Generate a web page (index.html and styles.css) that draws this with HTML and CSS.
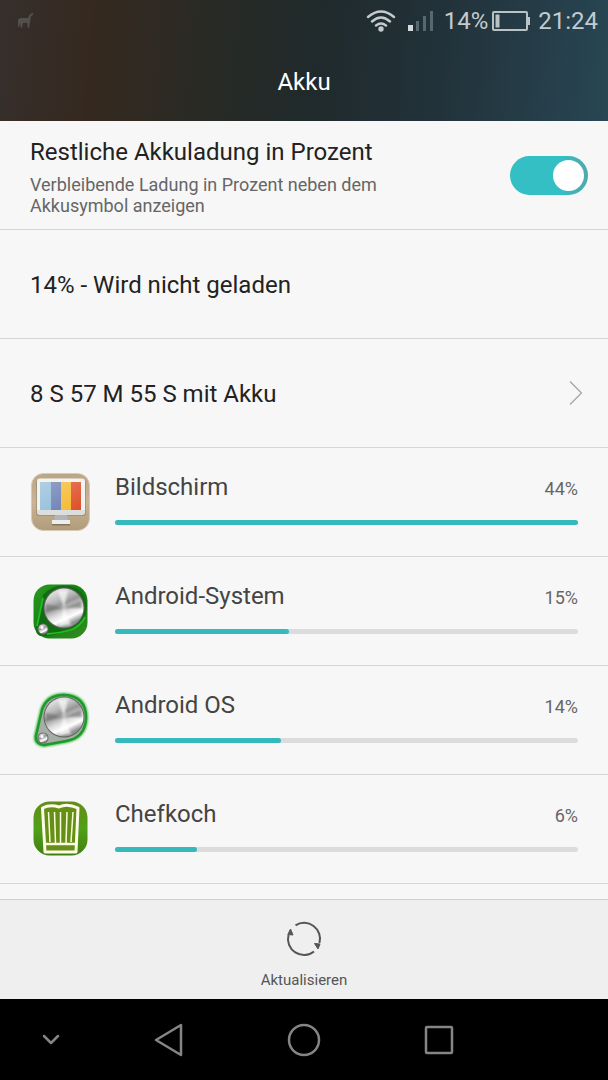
FILE: index.html
```html
<!DOCTYPE html>
<html lang="de">
<head>
  <meta charset="UTF-8" />
  <meta name="viewport" content="width=device-width, initial-scale=1.0" />
  <title>Akku</title>
  <link rel="stylesheet" href="styles.css">
</head>
<body>
  <header class="header">
    <div class="status-bar">
      <svg class="notification" width="20" height="20" viewBox="0 0 20 20">
        <path d="M2 9 4 7h8l2-4 3-1v2l-2 1-1 6-1 6h-1l-1-5H7l-1 5H5l-1-5-1 4H2z" fill="#53504c"/>
      </svg>
      <div class="status-icons">
        <svg width="30" height="22" viewBox="0 0 30 22" fill="none" stroke="#c3cbce" stroke-width="2.4" stroke-linecap="round">
          <path d="M2 7Q15-4 28 7M6 11.500Q15 3.500 24 11.500M10 15.500Q15 11.500 20 15.500"/>
          <circle cx="15" cy="19" r="2.700" fill="#c3cbce" stroke="none"/>
        </svg>
        <svg class="signal" width="26" height="22" viewBox="0 0 26 22" fill="#57686f">
          <path d="M0 15h5v6H0z" fill="#d5dadc"/>
          <path d="M8 11h3v10H8zM15 6h3v15h-3zM22 1h3v20h-3z"/>
        </svg>
        <span class="status-text">14%</span>
        <svg class="battery" width="38" height="20" viewBox="0 0 38 20">
          <rect x="1" y="1" width="34" height="18" rx="1" fill="none" stroke="#b9c2c6" stroke-width="2"/>
          <path d="M3.500 3.500h4v13h-4zM35 6h3v8h-3z" fill="#b9c2c6"/>
        </svg>
        <span class="status-text">21:24</span>
      </div>
    </div>
    <h1>Akku</h1>
  </header>

  <main class="list">
    <div class="row">
      <label class="row-text" for="percentSwitch">
        <span class="row-title">Restliche Akkuladung in Prozent</span>
        <span class="row-hint">Verbleibende Ladung in Prozent neben dem Akkusymbol anzeigen</span>
      </label>
      <input class="switch" id="percentSwitch" type="checkbox" role="switch" checked />
    </div>
    <div class="row">
      <span class="row-title">14% - Wird nicht geladen</span>
    </div>
    <a class="row" href="#">
      <span class="row-title">8 S 57 M 55 S mit Akku</span>
      <svg class="chevron" width="14" height="26" viewBox="0 0 14 26" fill="none" stroke="#a6a6a6" stroke-width="1.300">
        <path d="M1 1.500 12.500 13 1 24.500"/>
      </svg>
    </a>

    <!-- Verbraucher -->
    <div class="row app">
      <svg class="app-icon" viewBox="0 0 60 60">
        <defs>
          <linearGradient id="sand" x2="0" y2="1"><stop stop-color="#b9a587"/><stop offset=".5" stop-color="#c9b595"/><stop offset="1" stop-color="#b09b7a"/></linearGradient>
          <linearGradient id="shine" x2="1" y2="1"><stop stop-color="#fff" stop-opacity=".3"/><stop offset="1" stop-color="#fff" stop-opacity="0"/></linearGradient>
        </defs>
        <rect x="1.500" y="1.500" width="58" height="57" rx="12" fill="url(#sand)" stroke="#d8cbb4"/>
        <rect x="6" y="8" width="50" height="36" rx="3" fill="#8c7a60" opacity=".5"/>
        <rect x="7" y="6.500" width="48" height="36" rx="3" fill="#f3f3f1"/>
        <path d="M7 38h48v2q0 3-3 3H10q-3 0-3-3z" fill="#dcdddd"/>
        <path d="M10 10h11v28H10z" fill="#8dbbd8"/>
        <path d="M21 10h10v28H21z" fill="#667cb2"/>
        <path d="M31 10h10v28H31z" fill="#f5b92e"/>
        <path d="M41 10h10v28H41z" fill="#de4f29"/>
        <path d="M10 10h41v28H10z" fill="url(#shine)"/>
        <path d="M25 43h12l1 6H24z" fill="#b3b4b5"/>
        <path d="M22 48h18v4H22z" fill="#ecedee"/>
        <path d="M22 52h18v1.500H22z" fill="#857557"/>
      </svg>
      <div class="usage">
        <div class="usage-head"><span class="app-name">Bildschirm</span><span class="percent">44%</span></div>
        <div class="bar"><div class="bar-fill" style="width: 100%"></div></div>
      </div>
    </div>
    <div class="row app">
      <svg class="app-icon" viewBox="0 0 60 60">
        <defs>
          <linearGradient id="green" x2="1" y2="1"><stop stop-color="#2b9a20"/><stop offset=".5" stop-color="#138013"/><stop offset="1" stop-color="#368d20"/></linearGradient>
          <linearGradient id="metal" x2=".45" y2="1"><stop stop-color="#858585"/><stop offset=".18" stop-color="#ddd"/><stop offset=".36" stop-color="#bcbcbc"/><stop offset=".5" stop-color="#969696"/><stop offset=".7" stop-color="#ddd"/><stop offset=".85" stop-color="#fff"/><stop offset="1" stop-color="#919191"/></linearGradient>
          <filter id="soft"><feGaussianBlur stdDeviation=".9"/></filter>
          <g id="knob">
            <circle cx="34" cy="27" r="20.500" fill="#60655f"/>
            <circle cx="34" cy="27" r="19.500" fill="url(#metal)"/>
            <g filter="url(#soft)">
              <path d="M34 27 16 23v8z" fill="#666" opacity=".55"/>
              <path d="M34 27 51 20l1 7z" fill="#555" opacity=".5"/>
              <path d="M34 27 28 10l10-1zM34 27 29 45l12-1z" fill="#fff" opacity=".65"/>
            </g>
            <circle cx="13" cy="48" r="5.500" fill="#656b63"/>
            <circle cx="13" cy="48" r="4.500" fill="url(#metal)"/>
            <circle cx="12" cy="46.500" r="1.500" fill="#fff"/>
          </g>
        </defs>
        <rect x="3.500" y="3.500" width="54" height="54" rx="16" fill="url(#green)"/>
        <path d="M13 14Q23 2 40 5q16 4 17 20-1 18-17 24L20 55H10q-5-3-4-8z" fill="#126c12"/>
        <path d="M13 17 7 45M17 53q15-1 26-5 8-4 12-12" fill="none" stroke="#22bd24" stroke-width="1.800"/>
        <use href="#knob"/>
      </svg>
      <div class="usage">
        <div class="usage-head"><span class="app-name">Android-System</span><span class="percent">15%</span></div>
        <div class="bar"><div class="bar-fill" style="width: 37.5%"></div></div>
      </div>
    </div>
    <div class="row app">
      <svg class="app-icon" viewBox="0 0 60 60">
        <defs>
          <filter id="glow" x="-20%" y="-20%" width="140%" height="140%"><feGaussianBlur stdDeviation="1.300"/></filter>
        </defs>
        <path d="M12 20Q17 5 34 5q22 1 22 23-1 20-20 23l-22 4q-9-1-8-9z" fill="#435543" stroke="#35b538" stroke-width="4" filter="url(#glow)"/>
        <path d="M12 20Q17 5 34 5q22 1 22 23-1 20-20 23l-22 4q-9-1-8-9z" fill="#a5ada5" stroke="#1d9a2c" stroke-width="2.500"/>
        <use href="#knob"/>
      </svg>
      <div class="usage">
        <div class="usage-head"><span class="app-name">Android OS</span><span class="percent">14%</span></div>
        <div class="bar"><div class="bar-fill" style="width: 35.8%"></div></div>
      </div>
    </div>
    <div class="row app">
      <svg class="app-icon" viewBox="0 0 60 60">
        <defs>
          <linearGradient id="leaf" x2="0" y2="1"><stop stop-color="#648b19"/><stop offset=".5" stop-color="#50a018"/><stop offset="1" stop-color="#427f12"/></linearGradient>
        </defs>
        <rect x="3.500" y="2.500" width="54" height="54" rx="16" fill="url(#leaf)"/>
        <path d="M12.500 9Q20 5 29 8q8-4 19 1l-2 44H15z" fill="#668f17" stroke="#fffbe9" stroke-width="3" stroke-linejoin="round"/>
        <path d="M15 45h31" stroke="#fffbe9" stroke-width="2.500"/>
        <path d="M18.500 13 20 43M24.500 13l1 31M30.500 13v31M37 13l-1 31M43 13l-2 30" fill="none" stroke="#faffdb" stroke-width="1.500"/>
      </svg>
      <div class="usage">
        <div class="usage-head"><span class="app-name">Chefkoch</span><span class="percent">6%</span></div>
        <div class="bar"><div class="bar-fill" style="width: 17.7%"></div></div>
      </div>
    </div>
  </main>

  <footer class="toolbar">
    <button class="refresh" type="button">
      <svg width="36" height="36" viewBox="0 0 36 36" fill="none" stroke="#555" stroke-width="2">
        <path d="M9.500 4.300A16 16 0 0 1 33.500 22M28 30.500A16 16 0 0 1 2.500 14"/>
        <path d="M28.500 22.500l5.500.5-2 5zM1.800 13.500 4.500 8l2.500 6z" fill="#555" stroke-width="1"/>
      </svg>
      <span>Aktualisieren</span>
    </button>
  </footer>

  <nav class="nav-bar">
    <button type="button" aria-label="Leiste ausblenden">
      <svg width="18" height="12" viewBox="0 0 18 12"><path d="m2 2 7 7 7-7"/></svg>
    </button>
    <button type="button" aria-label="Zurück">
      <svg width="32" height="34" viewBox="0 0 32 34"><path d="M28 2v30L3 17z"/></svg>
    </button>
    <button type="button" aria-label="Startseite">
      <svg width="34" height="34" viewBox="0 0 34 34"><circle cx="17" cy="17" r="15"/></svg>
    </button>
    <button type="button" aria-label="Übersicht">
      <svg width="30" height="30" viewBox="0 0 30 30"><rect x="2" y="2" width="26" height="26" rx="1"/></svg>
    </button>
  </nav>
</body>
</html>
```
FILE: styles.css
```css
* { box-sizing: border-box; }
body {
  font-family: Roboto, "Liberation Sans", sans-serif;
  background: #f7f7f7;
  color: #222;
  min-height: 100vh;
  margin: 0;
  display: flex;
  flex-direction: column;
}
svg { display: block; flex: none; }
button {
  border: none;
  background: none;
  padding: 0;
  font-family: inherit;
  cursor: pointer;
}

.header {
  height: 121px;
  background: linear-gradient(96deg, #372f2c 0%, #35291f 16%, #292a25 34%, #202a2c 52%, #22323a 72%, #284654 100%);
  color: #fff;
}
.status-bar {
  height: 42px;
  padding: 0 10px 0 16px;
  display: flex;
  align-items: center;
  justify-content: space-between;
}
.status-icons {
  display: flex;
  align-items: center;
}
.signal { margin: 0 10px 0 12px; }
.battery { margin: 0 8px 0 4px; }
.status-text {
  font-size: 24px;
  line-height: 28px;
  color: #c3cbce;
}
h1 {
  margin: 0;
  font-size: 24px;
  line-height: 80px;
  font-weight: 400;
  text-align: center;
}

.list { flex: 1; }
.row {
  height: 109px;
  padding: 0 20px 0 30px;
  border-bottom: 1px solid #d6d6d6;
  display: flex;
  align-items: center;
  justify-content: space-between;
  color: inherit;
  text-decoration: none;
}
.row-text { max-width: 400px; }
.row-title {
  display: block;
  padding-top: 2px;
  font-size: 24px;
  line-height: 32px;
}
.row-hint {
  display: block;
  margin-top: 6px;
  font-size: 18px;
  line-height: 21px;
  color: #666;
}
.chevron { margin-right: 5px; }

.switch {
  appearance: none;
  flex: none;
  width: 78px;
  height: 39px;
  margin: 0;
  padding: 4px;
  border-radius: 20px;
  background: #bbb;
  display: flex;
}
.switch::before {
  content: "";
  width: 31px;
  height: 31px;
  border-radius: 50%;
  background: #fff;
}
.switch:checked {
  background: linear-gradient(90deg, #33bfc4 65%, #4fa8aa);
  justify-content: flex-end;
}

.app { padding-right: 30px; }
.app-icon {
  width: 60px;
  height: 60px;
  margin-right: 25px;
}
.usage {
  flex: 1;
  padding-bottom: 9px;
}
.usage-head {
  display: flex;
  align-items: baseline;
  justify-content: space-between;
  margin-bottom: 17px;
}
.app-name {
  font-size: 24px;
  line-height: 32px;
  color: #444;
}
.percent {
  font-size: 18px;
  line-height: 24px;
  color: #666;
}
.bar {
  height: 5px;
  border-radius: 3px;
  background: #dcdcdc;
}
.bar-fill {
  height: 100%;
  border-radius: 3px;
  background: #35b9bd;
}

.toolbar {
  height: 100px;
  border-top: 1px solid #d0d0d0;
  background: #efefef;
  display: flex;
  justify-content: center;
}
.refresh {
  display: flex;
  flex-direction: column;
  align-items: center;
  justify-content: center;
  gap: 13px;
  padding-top: 12px;
  font-size: 15px;
  line-height: 20px;
  color: #555;
}

.nav-bar {
  height: 81px;
  padding: 0 101px 0 0;
  background: #000;
  display: flex;
}
.nav-bar button {
  flex: 4;
  display: flex;
  align-items: center;
  justify-content: center;
}
.nav-bar button:first-child { flex: 3; }
.nav-bar svg {
  fill: none;
  stroke: #858585;
  stroke-width: 2.5;
  stroke-linejoin: round;
  stroke-linecap: round;
}
```
